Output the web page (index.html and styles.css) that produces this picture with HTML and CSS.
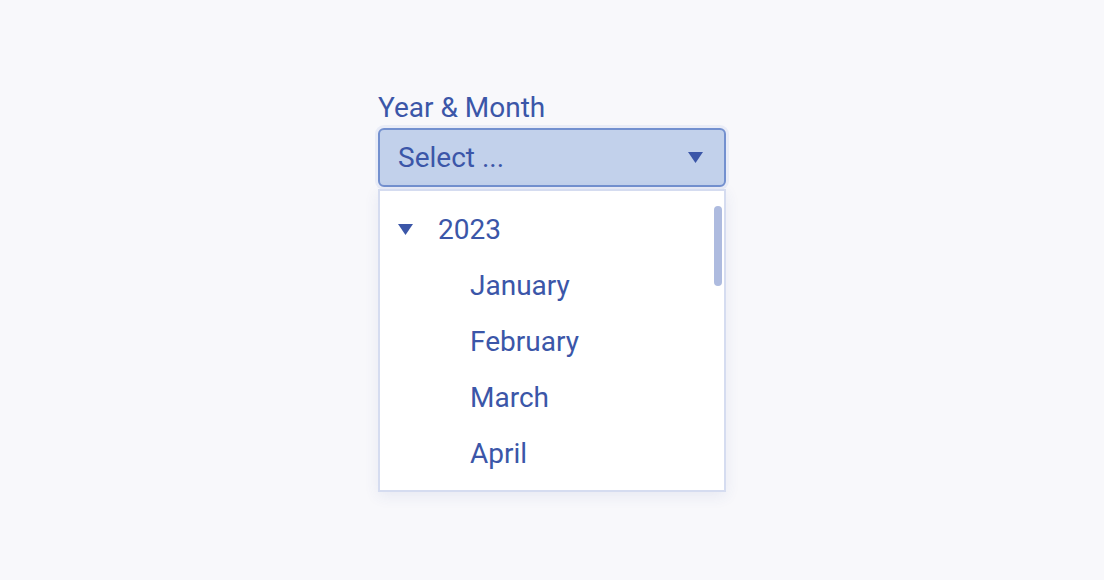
FILE: index.html
```html
<!DOCTYPE html>
<html lang="en">
<head>
  <meta charset="UTF-8">
  <title>Year &amp; Month</title>
  <link rel="stylesheet" href="styles.css">
</head>
<body>
  <div class="field">
    <label class="field-label" for="yearMonth">Year &amp; Month</label>
    <div class="select" id="yearMonth">
      <span class="select-value">Select ...</span>
      <svg class="caret" width="15" height="11" viewBox="0 0 15 11"><path d="M0 0H15L7.5 11Z"/></svg>
    </div>
    <div class="dropdown">
      <ul class="tree">
        <li class="tree-node">
          <div class="row year">
            <svg class="caret" width="15" height="11" viewBox="0 0 15 11"><path d="M0 0H15L7.5 11Z"/></svg>
            <span>2023</span>
          </div>
          <ul class="months">
            <li class="row month">January</li>
            <li class="row month">February</li>
            <li class="row month">March</li>
            <li class="row month">April</li>
          </ul>
        </li>
      </ul>
      <div class="scroll-thumb"></div>
    </div>
  </div>
</body>
</html>
```

FILE: styles.css
```css
body {
  font-family: Roboto, "Liberation Sans", sans-serif;
  display: flex;
  justify-content: center;
  align-items: center;
  height: 100vh;
  margin: 0;
  background-color: #f8f8fb;
  color: #3b56a8;
}
.field {
  width: 348px;
  margin-top: 3px;
  display: flex;
  flex-direction: column;
}
.field-label {
  font-size: 28px;
  line-height: 34px;
  margin-bottom: 3px;
}
.select {
  height: 59px;
  box-sizing: border-box;
  display: flex;
  align-items: center;
  justify-content: space-between;
  padding: 0 21px 0 18px;
  background-color: #c2d1eb;
  border: 2px solid #7390cf;
  border-radius: 6px;
  box-shadow: 0 0 0 3px #e9ecf7;
  font-size: 28px;
}
.caret {
  fill: #3b56a8;
  flex: none;
}
.dropdown {
  position: relative;
  margin-top: 2px;
  height: 303px;
  box-sizing: border-box;
  overflow: hidden;
  background-color: #fff;
  border: 2px solid #d5dcf0;
  box-shadow: 0 4px 14px rgba(60, 80, 150, 0.09);
}
.tree, .months {
  list-style: none;
  margin: 0;
  padding: 0;
}
.tree {
  padding-top: 10px;
}
.row {
  height: 56px;
  display: flex;
  align-items: center;
  font-size: 28px;
}
.year {
  padding-left: 18px;
}
.year span {
  margin-left: 25px;
}
.month {
  padding-left: 90px;
}
.scroll-thumb {
  position: absolute;
  top: 15px;
  right: 2px;
  width: 8px;
  height: 80px;
  border-radius: 4px;
  background-color: #aebbdf;
}
```
